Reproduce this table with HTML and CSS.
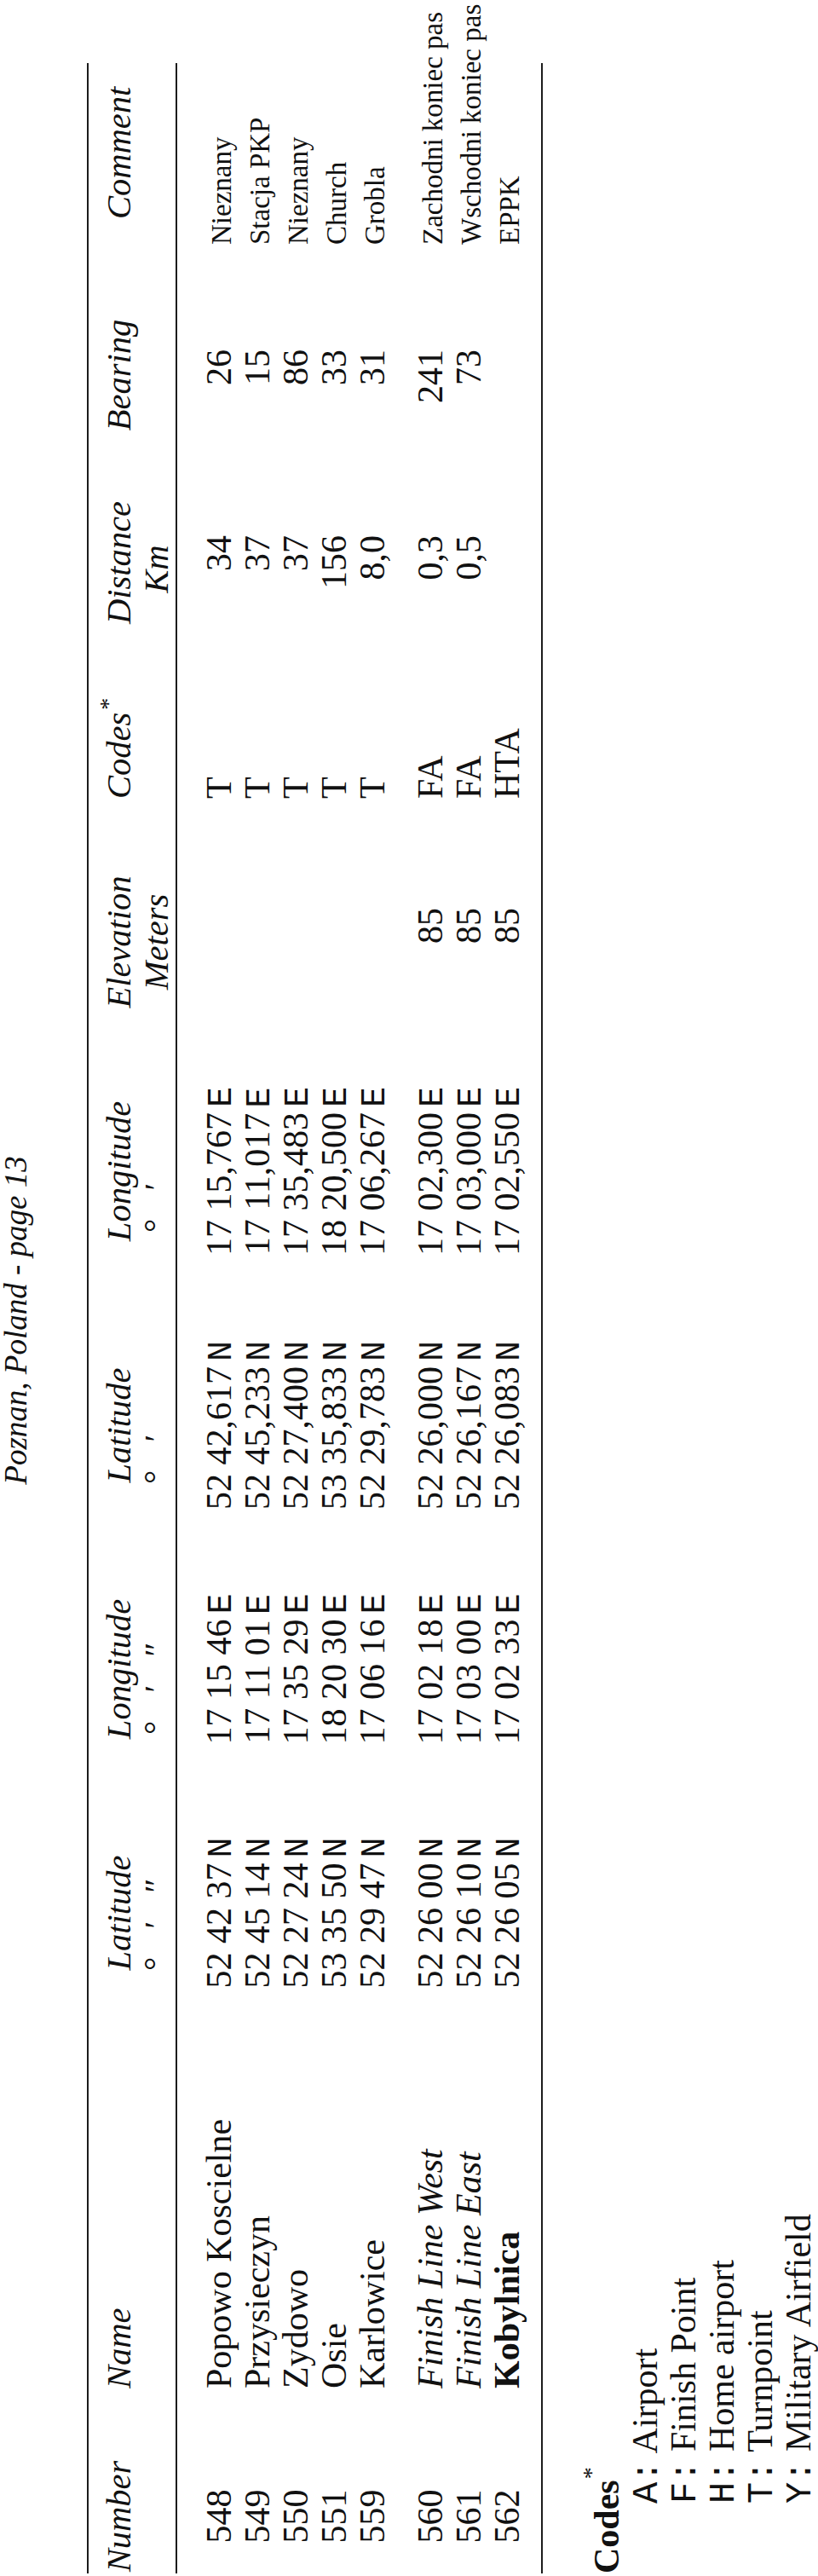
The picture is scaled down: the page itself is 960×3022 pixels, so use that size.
FILE: index.html
```html
<!DOCTYPE html>
<html lang="en">
<head>
<meta charset="utf-8">
<title>Poznan, Poland - page 13</title>
<link rel="stylesheet" href="styles.css">
</head>
<body>
<div class="viewport">
  <div class="sheet">
    <div class="title">Poznan, Poland - page 13</div>
    <div class="rule rule-top"></div>

    <div class="cols thead">
      <div class="c-num">Number</div>
      <div class="c-name">Name</div>
      <div class="c-latd"><div>Latitude</div><div class="sym sym-latd"><span>°</span><span>′</span><span>″</span></div></div>
      <div class="c-lond"><div>Longitude</div><div class="sym sym-lond"><span>°</span><span>′</span><span>″</span></div></div>
      <div class="c-latm"><div>Latitude</div><div class="sym sym-latm"><span>°</span><span>′</span></div></div>
      <div class="c-lonm"><div>Longitude</div><div class="sym sym-lonm"><span>°</span><span>′</span></div></div>
      <div class="c-elev"><div>Elevation</div><div>Meters</div></div>
      <div class="c-code">Codes<span class="ast">*</span></div>
      <div class="c-dist"><div>Distance</div><div class="km">Km</div></div>
      <div class="c-bear">Bearing</div>
      <div class="c-cmt">Comment</div>
    </div>
    <div class="rule"></div>

    <div class="tbody">
      <div class="group">
        <div class="cols tr">
          <div class="c-num">548</div>
          <div class="c-name">Popowo Koscielne</div>
          <div class="c-latd">52 42 37<span class="m">N</span></div>
          <div class="c-lond">17 15 46<span class="m">E</span></div>
          <div class="c-latm">52 42,617<span class="m">N</span></div>
          <div class="c-lonm">17 15,767<span class="m">E</span></div>
          <div class="c-elev"></div>
          <div class="c-code">T</div>
          <div class="c-dist">34</div>
          <div class="c-bear">26</div>
          <div class="c-cmt">Nieznany</div>
        </div>
        <div class="cols tr">
          <div class="c-num">549</div>
          <div class="c-name">Przysieczyn</div>
          <div class="c-latd">52 45 14<span class="m">N</span></div>
          <div class="c-lond">17 11 01<span class="m">E</span></div>
          <div class="c-latm">52 45,233<span class="m">N</span></div>
          <div class="c-lonm">17 11,017<span class="m">E</span></div>
          <div class="c-elev"></div>
          <div class="c-code">T</div>
          <div class="c-dist">37</div>
          <div class="c-bear">15</div>
          <div class="c-cmt">Stacja PKP</div>
        </div>
        <div class="cols tr">
          <div class="c-num">550</div>
          <div class="c-name">Zydowo</div>
          <div class="c-latd">52 27 24<span class="m">N</span></div>
          <div class="c-lond">17 35 29<span class="m">E</span></div>
          <div class="c-latm">52 27,400<span class="m">N</span></div>
          <div class="c-lonm">17 35,483<span class="m">E</span></div>
          <div class="c-elev"></div>
          <div class="c-code">T</div>
          <div class="c-dist">37</div>
          <div class="c-bear">86</div>
          <div class="c-cmt">Nieznany</div>
        </div>
        <div class="cols tr">
          <div class="c-num">551</div>
          <div class="c-name">Osie</div>
          <div class="c-latd">53 35 50<span class="m">N</span></div>
          <div class="c-lond">18 20 30<span class="m">E</span></div>
          <div class="c-latm">53 35,833<span class="m">N</span></div>
          <div class="c-lonm">18 20,500<span class="m">E</span></div>
          <div class="c-elev"></div>
          <div class="c-code">T</div>
          <div class="c-dist">156</div>
          <div class="c-bear">33</div>
          <div class="c-cmt">Church</div>
        </div>
        <div class="cols tr">
          <div class="c-num">559</div>
          <div class="c-name">Karlowice</div>
          <div class="c-latd">52 29 47<span class="m">N</span></div>
          <div class="c-lond">17 06 16<span class="m">E</span></div>
          <div class="c-latm">52 29,783<span class="m">N</span></div>
          <div class="c-lonm">17 06,267<span class="m">E</span></div>
          <div class="c-elev"></div>
          <div class="c-code">T</div>
          <div class="c-dist">8,0</div>
          <div class="c-bear">31</div>
          <div class="c-cmt">Grobla</div>
        </div>
      </div>

      <div class="group">
        <div class="cols tr">
          <div class="c-num">560</div>
          <div class="c-name it">Finish Line West</div>
          <div class="c-latd">52 26 00<span class="m">N</span></div>
          <div class="c-lond">17 02 18<span class="m">E</span></div>
          <div class="c-latm">52 26,000<span class="m">N</span></div>
          <div class="c-lonm">17 02,300<span class="m">E</span></div>
          <div class="c-elev">85</div>
          <div class="c-code">FA</div>
          <div class="c-dist">0,3</div>
          <div class="c-bear">241</div>
          <div class="c-cmt">Zachodni koniec pas</div>
        </div>
        <div class="cols tr">
          <div class="c-num">561</div>
          <div class="c-name it">Finish Line East</div>
          <div class="c-latd">52 26 10<span class="m">N</span></div>
          <div class="c-lond">17 03 00<span class="m">E</span></div>
          <div class="c-latm">52 26,167<span class="m">N</span></div>
          <div class="c-lonm">17 03,000<span class="m">E</span></div>
          <div class="c-elev">85</div>
          <div class="c-code">FA</div>
          <div class="c-dist">0,5</div>
          <div class="c-bear">73</div>
          <div class="c-cmt">Wschodni koniec pas</div>
        </div>
        <div class="cols tr">
          <div class="c-num">562</div>
          <div class="c-name bd">Kobylnica</div>
          <div class="c-latd">52 26 05<span class="m">N</span></div>
          <div class="c-lond">17 02 33<span class="m">E</span></div>
          <div class="c-latm">52 26,083<span class="m">N</span></div>
          <div class="c-lonm">17 02,550<span class="m">E</span></div>
          <div class="c-elev">85</div>
          <div class="c-code">HTA</div>
          <div class="c-dist"></div>
          <div class="c-bear"></div>
          <div class="c-cmt">EPPK</div>
        </div>
      </div>
    </div>
    <div class="rule"></div>

    <div class="legend">
      <div class="legend-title">Codes<span class="ast ast-l">*</span></div>
      <div class="legend-item"><span class="key">A:</span> Airport</div>
      <div class="legend-item"><span class="key">F:</span> Finish Point</div>
      <div class="legend-item"><span class="key">H:</span> Home airport</div>
      <div class="legend-item"><span class="key">T:</span> Turnpoint</div>
      <div class="legend-item"><span class="key">Y:</span> Military Airfield</div>
    </div>
  </div>
</div>
</body>
</html>
```
FILE: styles.css
```css
html, body {
  margin: 0;
  padding: 0;
  background: #ffffff;
  overflow: hidden;
}

body {
  width: 960px;
  height: 3022px;
}

.viewport {
  width: 960px;
  height: 3022px;
  overflow: hidden;
}

/* the printed page is landscape, turned a quarter turn counter-clockwise */
.sheet {
  width: 3022px;
  height: 960px;
  transform-origin: 0 0;
  transform: translateY(3022px) rotate(-90deg);
  font-family: "Liberation Serif", "Times New Roman", serif;
  color: #111;
  background: #fff;
}

.title {
  font-size: 37px;
  line-height: 37px;
  font-style: italic;
  text-align: center;
  padding-right: 76px;
  white-space: nowrap;
}

.rule {
  height: 2px;
  width: 2945px;
  margin-left: 3px;
  background: #1c1c1c;
}

.rule-top {
  margin-top: 65px;
}

/* shared column template */
.cols {
  display: grid;
  grid-template-columns: 140px 520px 236px 48px 240px 332px 264px 274px 186px 244px 196px 342px;
  white-space: nowrap;
}

.c-num  { grid-column: 1;  text-align: center; }
.c-name { grid-column: 2;  padding-left: 80px; }
.c-latd { grid-column: 3;  text-align: center; }
.c-lond { grid-column: 5;  text-align: center; }
.c-latm { grid-column: 6;  text-align: center; }
.c-lonm { grid-column: 7;  text-align: center; }
.c-elev { grid-column: 8;  text-align: center; }
.c-code { grid-column: 9;  padding-left: 31px; }
.c-dist { grid-column: 10; text-align: center; }
.c-bear { grid-column: 11; text-align: center; }
.c-cmt  { grid-column: 12; }

/* header */
.thead {
  padding-top: 14px;
  font-size: 40.5px;
  line-height: 44px;
  font-style: italic;
}

.thead .c-cmt {
  padding-left: 85px;
}

.sym {
  text-align: left;
  font-style: normal;
}

.sym span {
  display: inline-block;
  width: 46px;
  text-align: center;
}

.sym-latd { padding-left: 35px; }
.sym-lond { padding-left: 28px; }
.sym-latm { padding-left: 82px; }
.sym-lonm { padding-left: 45px; }

.km {
  padding-right: 15px;
}

.ast {
  font-style: normal;
  font-weight: normal;
  font-size: 28px;
  line-height: 0;
  vertical-align: 17px;
  margin-left: 3px;
}

.ast-l {
  vertical-align: 23px;
  margin-left: 1px;
}

/* body */
.tbody {
  padding: 27px 0 17px;
}

.group + .group {
  margin-top: 23px;
}

.tr {
  font-size: 42px;
  line-height: 45px;
  height: 45px;
  grid-template-rows: 45px;
}

.tr .c-elev {
  text-align: right;
  padding-right: 97px;
}

.tr .c-dist {
  text-align: right;
  padding-right: 90px;
}

.tr .c-bear {
  text-align: right;
  padding-right: 68px;
}

.tr .c-cmt {
  font-size: 33px;
  line-height: 51px;
  padding-left: 55px;
}

.it { font-style: italic; }
.bd { font-weight: bold; }

.m {
  font-family: "Liberation Mono", "Courier New", monospace;
  font-size: 40px;
  line-height: 0;
  margin-left: 6px;
}

/* legend */
.legend {
  margin-top: 53px;
  font-size: 42px;
  line-height: 45px;
  white-space: nowrap;
}

.legend-title {
  font-weight: bold;
  padding-left: 3px;
}

.legend-item {
  padding-left: 85px;
}

.key {
  font-family: "Liberation Mono", "Courier New", monospace;
  font-size: 42px;
  line-height: 0;
}
```
